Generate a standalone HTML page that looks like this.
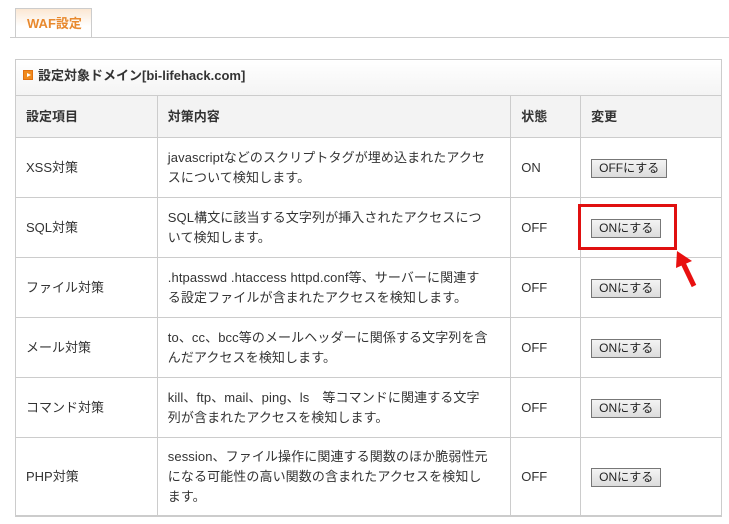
<!DOCTYPE html>
<html><head><meta charset="utf-8"><style>
*{margin:0;padding:0;box-sizing:border-box}
body{width:729px;height:524px;background:#fff;font-family:"Liberation Sans","Noto Sans CJK JP",sans-serif;color:#333;font-size:13px;position:relative;overflow:hidden}
.abs{position:absolute}
.tab{left:15px;top:8px;width:77px;height:30px;border:1px solid #ccc;border-bottom:none;background:linear-gradient(#fbe7d3,#fff 60%);color:#e8892e;font-weight:bold;font-size:13px;line-height:30px;padding-left:11px}
.tabline{left:10px;top:37px;width:719px;height:1px;background:#ccc}
.box{left:15px;top:59px;width:707px;height:457px;border:1px solid #ccc}
.title{left:16px;top:60px;width:705px;height:35px;background:linear-gradient(#fff,#f4f4f4);font-weight:bold;font-size:13px;line-height:31px;padding-left:22px}
.ico{left:23px;top:70px;width:10px;height:10px;background:#f08a1c;border:1px solid #e07010}
.ico:after{content:"";position:absolute;left:3px;top:2px;border-left:4px solid #fff;border-top:2px solid transparent;border-bottom:2px solid transparent}
table{position:absolute;left:15px;top:95px;border-collapse:collapse;width:707px}
td{border:1px solid #ccc;padding:0 10px;vertical-align:middle;line-height:20px}
td.c{padding-right:18px;letter-spacing:0.1px}
tr.h td{height:42px;background:#f3f3f3;font-weight:bold}
.btn{display:inline-block;border:1px solid #777;background:linear-gradient(#f4f4f4,#dcdcdc);font-size:12px;line-height:17px;padding:0 7px;color:#222}
</style></head><body>
<div class="abs tab">WAF設定</div>
<div class="abs tabline"></div>
<div class="abs box"></div>
<div class="abs title">設定対象ドメイン[bi-lifehack.com]</div>
<div class="abs ico"></div>
<table>
<colgroup><col style="width:142px"><col style="width:354px"><col style="width:70px"><col style="width:141px"></colgroup>
<tr class="h"><td>設定項目</td><td>対策内容</td><td>状態</td><td>変更</td></tr>
<tr style="height:60px"><td>XSS対策</td><td class="c">javascriptなどのスクリプトタグが埋め込まれたアクセスについて検知します。</td><td>ON</td><td><span class="btn">OFFにする</span></td></tr>
<tr style="height:60px"><td>SQL対策</td><td class="c">SQL構文に該当する文字列が挿入されたアクセスについて検知します。</td><td>OFF</td><td><span class="btn">ONにする</span></td></tr>
<tr style="height:60px"><td>ファイル対策</td><td class="c">.htpasswd .htaccess httpd.conf等、サーバーに関連する設定ファイルが含まれたアクセスを検知します。</td><td>OFF</td><td><span class="btn">ONにする</span></td></tr>
<tr style="height:60px"><td>メール対策</td><td class="c">to、cc、bcc等のメールヘッダーに関係する文字列を含んだアクセスを検知します。</td><td>OFF</td><td><span class="btn">ONにする</span></td></tr>
<tr style="height:60px"><td>コマンド対策</td><td class="c">kill、ftp、mail、ping、ls　等コマンドに関連する文字列が含まれたアクセスを検知します。</td><td>OFF</td><td><span class="btn">ONにする</span></td></tr>
<tr style="height:79px"><td>PHP対策</td><td class="c">session、ファイル操作に関連する関数のほか脆弱性元になる可能性の高い関数の含まれたアクセスを検知します。</td><td>OFF</td><td><span class="btn">ONにする</span></td></tr>
</table>
<div class="abs" style="left:578px;top:204px;width:99px;height:46px;border:3px solid #e01010"></div>
<svg class="abs" style="left:670px;top:245px" width="40" height="50"><line x1="24" y1="41" x2="13" y2="18" stroke="#e81010" stroke-width="5"/><polygon points="7,6 22,16 6,23" fill="#e81010"/></svg>
</body></html>
